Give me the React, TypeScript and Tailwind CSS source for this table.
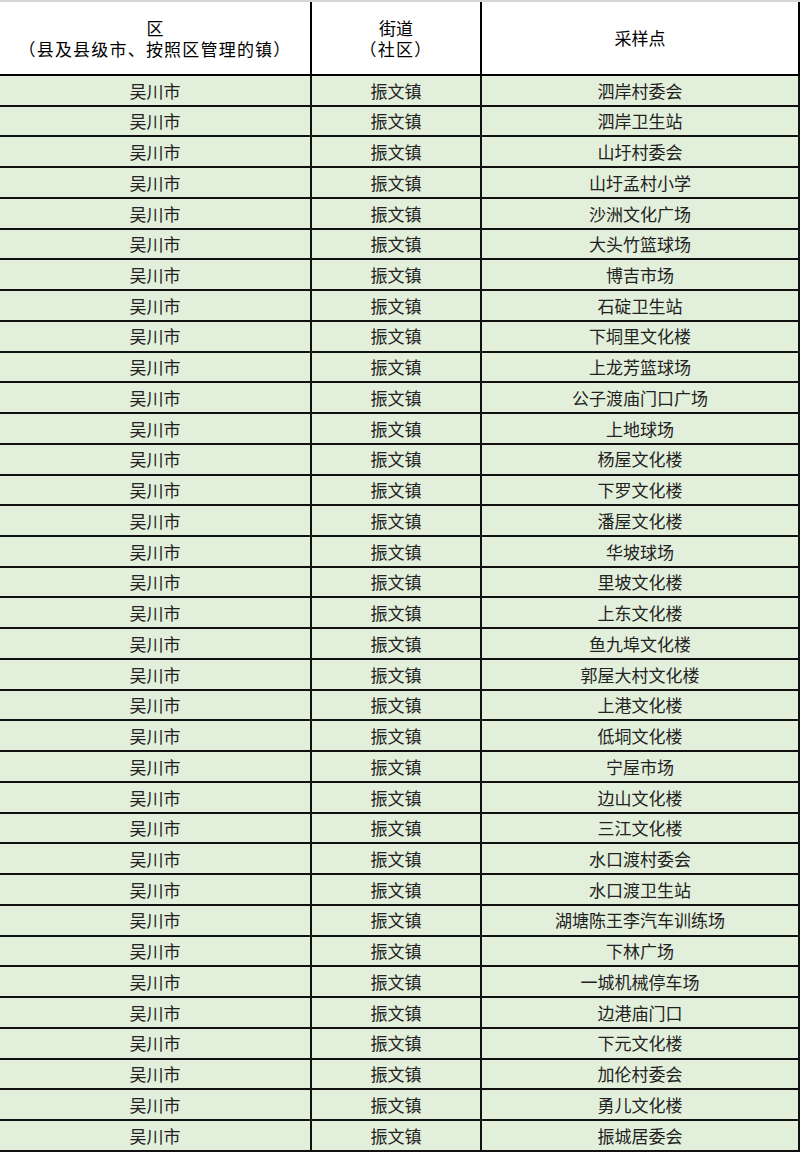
const ROWS = [
  "泗岸村委会",
  "泗岸卫生站",
  "山圩村委会",
  "山圩孟村小学",
  "沙洲文化广场",
  "大头竹篮球场",
  "博吉市场",
  "石碇卫生站",
  "下垌里文化楼",
  "上龙芳篮球场",
  "公子渡庙门口广场",
  "上地球场",
  "杨屋文化楼",
  "下罗文化楼",
  "潘屋文化楼",
  "华坡球场",
  "里坡文化楼",
  "上东文化楼",
  "鱼九埠文化楼",
  "郭屋大村文化楼",
  "上港文化楼",
  "低垌文化楼",
  "宁屋市场",
  "边山文化楼",
  "三江文化楼",
  "水口渡村委会",
  "水口渡卫生站",
  "湖塘陈王李汽车训练场",
  "下林广场",
  "一城机械停车场",
  "边港庙门口",
  "下元文化楼",
  "加伦村委会",
  "勇儿文化楼",
  "振城居委会",
]

export default function App() {
  return (
    <div
      className="w-[800px] h-[1152px] overflow-hidden bg-white text-[17px] text-[#222]"
      style={{ fontFamily: '"Noto Sans CJK SC", sans-serif' }}
    >
      <div className="border-t-2 border-[#d6d6d6]">
        {/* header */}
        <div className="flex h-[74px] border-b-2 border-black bg-white text-black">
          <div className="w-[312px] flex flex-col items-center justify-center leading-[21px] border-r-2 border-black">
            <span>区</span>
            <span className="tracking-[1.2px]">（县及县级市、按照区管理的镇）</span>
          </div>
          <div className="w-[170px] flex flex-col items-center justify-center leading-[21px] border-r-2 border-black">
            <span>街道</span>
            <span className="tracking-[1.2px]">（社区）</span>
          </div>
          <div className="w-[318px] flex items-center justify-center border-r-2 border-black">采样点</div>
        </div>

        {/* rows */}
        {ROWS.map((name) => (
          <div key={name} className="flex h-[30.74px] border-b-2 border-[#111] bg-[#e2efda]">
            <div className="w-[312px] flex items-center justify-center border-r-2 border-[#111]">吴川市</div>
            <div className="w-[170px] flex items-center justify-center border-r-2 border-[#111]">振文镇</div>
            <div className="w-[318px] flex items-center justify-center border-r-2 border-[#111]">{name}</div>
          </div>
        ))}
      </div>
    </div>
  )
}
